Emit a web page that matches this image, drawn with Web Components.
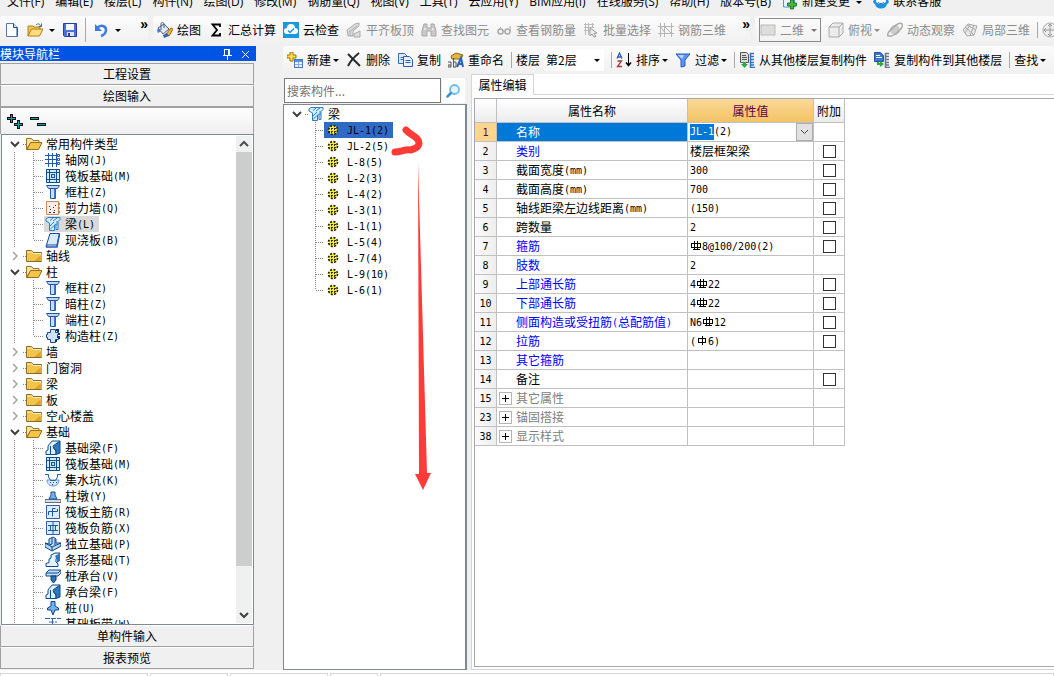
<!DOCTYPE html>
<html lang="zh-CN">
<head>
<meta charset="utf-8">
<title>属性编辑</title>
<style>
html,body{margin:0;height:100%}
body{font:12px/16px "Noto Sans CJK SC",sans-serif;color:#000;background:#f0f0f0;overflow:hidden}
</style>
</head>
<body>
<app-window></app-window>
<script>
/* Icon set: every icon is drawn on a 16 x 16 grid */
const page = (x, y, f = '#fff', s = '#4f74a8') => `<path d="M${x} ${y}h6l3 3v7h-9z" fill="${f}" stroke="${s}"/><path d="M${x + 2} ${y + 4}h5M${x + 2} ${y + 6}h5" stroke="${s}"/>`;
const beam = `<path d="M1 14.500V11l2-1V6l4-5h8L10 7v3l1 1v3.500z" fill="#dff0ff" stroke="#0b4a94"/><path d="M8 6l7-5v12l-4 1.500V10L9 9z" fill="#2f78bd" stroke="#0b4a94"/><path d="M5.500 6v8" stroke="#0b4a94"/>`;
const ICONS = {
  file: '<path d="M2.500 1.500h7l4 4v9h-11z" fill="#fff" stroke="#5577a5"/><path d="M9.500 1.500v4h4" fill="#cfe0f5" stroke="#2c4f80"/><path d="M13 6v8" stroke="#234777"/>',
  open: '<path d="M1 14V4h5l1 1h6v3H5z" fill="#f5c856" stroke="#b08223"/><path d="M1 14l3.500-7H16l-3.500 7z" fill="#ffdd7d" stroke="#b27c16"/><path d="M9 3c2-2 4-1 4.500 1M14.500 1.500v3h-3" fill="none" stroke="#44668f"/>',
  save: '<path d="M1.500 1.500h13v13h-12l-1-1z" fill="#4c6fd8" stroke="#2a3f9c"/><path d="M4 2h8v6H4z" fill="#f4f7ff"/><path d="M5 10h7v4H5z" fill="#dfe4f3"/><path d="M6 11h2v3H6z" fill="#2a3f9c"/>',
  undo: '<path d="M4 6c4-4 9-2 9 2 0 3-2 5-5 6" fill="none" stroke="#3f7be0" stroke-width="2.500"/><path d="M2 2v7h7z" fill="#3f7be0"/>',
  bucket: '<path d="M1 6l6-4 5 5-6 5z" fill="#e3e9f1" stroke="#4d5f78"/><path d="M4 8V2c0-2 3-2 3 0v4" fill="none" stroke="#4d5f78"/><path d="M1 6c-1 2-1 4 0 5l3-2z" fill="#3e7ad6"/><path d="M9 12l5-6 2 1-4 7z" fill="#f1b33b" stroke="#a06c14"/><path d="M6 13l4-2 2 3-5 2z" fill="#2e65c4"/>',
  sigma: '<path d="M12 5V2.500H4.500L9 8l-4.500 5.500H12V11" fill="none" stroke="#000" stroke-width="1.800"/>',
  cloud: '<rect width="16" height="16" fill="#1b98df"/><path d="M4 12a3 3 0 0 1 0-6 4 4 0 0 1 8 0 3 3 0 0 1 0 6z" fill="#fff"/><path d="M5 8.500l2 2 4-4" fill="none" stroke="#1b98df" stroke-width="1.500"/>',
  align: '<path d="M1 8l8-6 4-1v3l-6 5v5H2zM8 12l6-3v6H8z" fill="#ddd" stroke="#aaa"/><path d="M3 10l8-6M4 9v5" stroke="#aaa"/>',
  find: '<path d="M3 2h3v4h4V2h3l2 7v5h-5v-5H6v5H1V9z" fill="#c9c9c9" stroke="#a9a9a9"/><path d="M3 7h2M11 7h2" stroke="#fff"/>',
  glass: '<circle cx="4.500" cy="9.500" r="2.500" stroke="#aaa" stroke-width="1.500"/><circle cx="11.500" cy="9.500" r="2.500" stroke="#aaa" stroke-width="1.500"/><path d="M2 9l3-4M14 9V4M7 9h2" stroke="#aaa"/>',
  batch: '<path d="M1 2.500h10M1 5.500h10M1 8.500h6M2.500 1v12M5.500 1v12M9.500 1v5" stroke="#bbb"/><path d="M7 6l7 5-3 .5 2 3-2 .5-2-3-2 2z" fill="#eee" stroke="#999"/>',
  steel: '<path d="M2.500 1v14M6.500 1v14M13.500 1v14M0 4.500h16M0 11.500h16M6 4l7 7M2 4l5 7" stroke="#b5b5b5" fill="none"/>',
  flat: '<rect x="1" y="3" width="14" height="10" fill="#ddd" stroke="#bbb"/>',
  cube: '<path d="M1 5l4-4h10v10l-4 4H1z" fill="#ececec" stroke="#aaa"/><path d="M1 5h10v10M11 5l4-4" fill="none" stroke="#aaa"/>',
  orbit: '<circle cx="8" cy="8" r="5" fill="#ccc"/><path d="M1 14C-1 10 12-1 15 2s-9 13-12 12z" fill="none" stroke="#aaa" stroke-width="1.500"/>',
  local: '<path d="M1 8l5-6 9 2-3 9-7 1z" fill="#e8e8e8" stroke="#aaa"/><path d="M3 5l9 8M8 3l-5 8M12 3l-4 11M5 3l9 5" stroke="#aaa"/>',
  pan: '<circle cx="8" cy="8" r="7" fill="#eee" stroke="#aaa"/><path d="M8 2v12M2 8h12M6 4l2-2 2 2M6 12l2 2 2-2M4 6L2 8l2 2M12 6l2 2-2 2" stroke="#999" fill="none"/>',
  create: '<path d="M3 0h3v3h3v3H6v3H3V6H0V3h3z" fill="#ffdc45" stroke="#9b7510"/><rect x="7.500" y="7.500" width="8" height="8" fill="#e9f3ff" stroke="#4479bb"/><path d="M8 8h7v2H8z" fill="#5b93dc"/><path d="M8 12.500h7M11.500 10v5" stroke="#8caede"/>',
  del: '<path d="M2 2l12 12M13 1C8 5 4 10 2 14" stroke="#2b2b2b" stroke-width="2" fill="none"/>',
  copy: page(1.5, 1.5, '#dbe9ff', '#3c69ab') + page(6.5, 4.5, '#e7f1ff', '#2c5da8'),
  rename: '<path d="M3 4l5-3 7 2-2 4H4z" fill="#e4b53f" stroke="#8c6a1c"/><path d="M0 10h3v5H0v-2h3M5.500 6v9M5 10h3v5H5" stroke="#555" fill="none"/><path d="M9 15l4-9 2 9M10 12h4" stroke="#2862bd" stroke-width="2" fill="none"/>',
  sort: '<path d="M1 6.500L3.500 1 6 6.500M2 5h3" fill="none" stroke="#2f5db0" stroke-width="1.300"/><path d="M1.500 9h4l-4 5.500H6" fill="none" stroke="#a23838" stroke-width="1.300"/><path d="M12.500 1v12" stroke="#000"/><path d="M10 10.500l2.500 3 2.500-3" stroke="#000" stroke-width="1.500" fill="none"/>',
  filter: '<path d="M1 2h14l-5 6v6l-4 1V8z" fill="#5f93ee" stroke="#2a5ac2"/><path d="M3 3h6l-2 4z" fill="#b9d4ff"/>',
  from: '<path d="M1.500.5h6l2 2v8h-8z" fill="#ddd" stroke="#555"/><path d="M3 3.500h4M3 5.500h5M3 7.500h5" stroke="#555"/><path d="M4 10h3v2h2l-3.500 4L2 12h2z" fill="#2da64a"/><path d="M15 1.500h-3.500v14H16M12 4.500h3M12 7.500h3M12 10.500h3M12 13h3" stroke="#3472c0" stroke-width="1.500" fill="none"/>',
  to: '<path d="M.5.500h6l3 3v6h-9z" fill="#3c77d2" stroke="#2450a0"/><path d="M2 3.500h4M2 5.500h6" stroke="#fff"/><path d="M3 10v3h3v2l4-3-4-3v2H5v-1z" fill="#2da64a"/><path d="M15 1.500h-3.500v14H16M12 4.500h3M12 7.500h3M12 10.500h3M12 13h3" stroke="#66778c" stroke-width="1.500" fill="none"/>',
  change: '<path d="M1.500 0h8l3 3v10h-11z" fill="#e4f4ff" stroke="#3c9bd8"/><path d="M8.500 6h3v3h3v3h-3v3h-3v-3h-3V9h3z" fill="#52b043" stroke="#2c7d22"/>',
  service: '<path d="M1 6c0-8 14-8 14 0 2 2 0 4-1 4-1 6-11 6-12 0C1 10-1 8 1 6z" fill="#1b8fe0"/><ellipse cx="8" cy="7" rx="5" ry="3" fill="#fff"/><path d="M5 8c1 2 5 2 6 0" stroke="#1b6fc0" fill="none"/>',
  search: '<circle cx="9.500" cy="6.500" r="4.500" fill="#e4f4ff" stroke="#6fbbee" stroke-width="1.800"/><path d="M6 10l-3.500 3.500" stroke="#3c8fd0" stroke-width="2.500" stroke-linecap="round"/>',
  pin: '<path d="M5.500 3v6M10.500 3v6M5 3.500h6M9.500 3v6M3.500 9.500h9M8 10v4" stroke="#fff" fill="none" shape-rendering="crispEdges"/>',
  close: '<path d="M4 5l7 7M11 5l-7 7" stroke="#fff"/>',
  addall: '<path d="M3 1h3v3h3v3H6v3H3V7H0V4h3z" fill="#111"/><path d="M4.500 2v7M1 5.500h7" stroke="#00a5a0"/><path d="M10 7h3v3h3v3h-3v3h-3v-3H7v-3h3z" fill="#111"/><path d="M11.500 8v7M8 11.500h7" stroke="#00a5a0"/>',
  delall: '<path d="M0 4h9v3H0zM7 10h9v3H7z" fill="#111"/><path d="M1 5.500h7M8 11.500h7" stroke="#00a5a0"/>',
  folder: '<path d="M.5 13.500v-11h5l1.500 2h8.500v9z" fill="#f2c54f" stroke="#8b6b2c"/><path d="M1 4h5l1.500 1.500H15V13" fill="none" stroke="#fff0b5"/><path d="M8 13h7V7z" fill="#d99518" opacity=".7"/>',
  folderopen: '<path d="M.5 13.500v-11h5l1.500 2h6v3H4z" fill="#f8e3a0" stroke="#9a742c"/><path d="M1 13.500l3.500-7h11.500l-3.500 7z" fill="#f5c44a" stroke="#9a6d16"/>',
  grid: '<path d="M0 3.500h14M0 7.500h14M0 11.500h14M3.500 1v14M7.500 1v14M11.500 1v14" stroke="#2458ae" shape-rendering="crispEdges"/><path d="M12.500 2.500h2v2h-2zM12.500 6.500h2v2h-2zM12.500 10.500h2v2h-2z" fill="#fff" stroke="#2458ae"/>',
  raft: '<path d="M1.500 1.500h13v13h-13z" fill="#d5eaff" stroke="#0a4a93"/><path d="M1 4.500h14M1 11.500h14M4.500 1v14M11.500 1v14M6.500 6.500h3v3h-3z" fill="none" stroke="#0a4a93" shape-rendering="crispEdges"/>',
  column: '<path d="M1.500 1.500h13l-2 3h-9z" fill="#bcd9ff" stroke="#2456a8"/><path d="M5.500 4.500h5v10h-5z" fill="#c9e0ff" stroke="#2456a8"/><path d="M9 5h1.500v9H9z" fill="#3f73cc"/>',
  wall: '<path d="M1.500 1.500h12v13h-12z" fill="#f7ede6" stroke="#c98a62"/><path d="M4 6.500h1M8 7.500h1M5 9.500h1M9 10.500h1M4 12.500h2M8 12.500h2M10 5.500h1" stroke="#333"/><path d="M13 4h2M13 8h2M13 12h2" stroke="#d47433" stroke-width="2"/>',
  beam: '<path d="M1 3l2-1.500h12v2l-2 2v8h-2V8l-1.500 1v5.500h-5V7L1 5z" fill="#d8edff" stroke="#2c7bc2"/><path d="M5 4.500L8 2M8 5l4-3M5 10l4-4M5 13.500l4-4M12 9V5" fill="none" stroke="#1e83cf"/>',
  slab: '<path d="M5 1.500h9.500L12 13H1.500z" fill="#d9eaff" stroke="#164a9c"/><path d="M1.500 13v2H12l2.500-13" fill="none" stroke="#2659b1" stroke-width="1.500"/>',
  gear: '<path d="M5.500 1.500h5v3h3v2h-1v3h1v2h-3v3h-5v-3h-3v-2h-1v-3h1v-2h3z" fill="#cfe2fb" stroke="#174a92"/><path d="M11 2h2v2M14 5v2M12 9h2v2M11 12v2" stroke="#0b3270" stroke-width="2" fill="none"/>',
  fbeam: beam,
  pit: '<path d="M2 8c0 8 12 8 12 0z" fill="#d9eaff" stroke="#5c90d4"/><path d="M0 2.500h3.500V5l2 3.500h5l2-3.500V2.500H16" fill="none" stroke="#2a62b0"/><path d="M5 10.500h1M8 10.500h1M11 10.500h1M7 12.500h1" stroke="#164a92"/>',
  pier: '<path d="M0 11.500h16v3H0z" fill="#d7dce2" stroke="#63707d"/><path d="M4 11l2-4V4h4v3l2 4z" fill="#6fb1f2" stroke="#164f98"/>',
  main: '<path d="M1.500 1.500h13v13h-13z" fill="#dcecff" stroke="#315fae"/><path d="M3.500 11V7.500h9V5M7.500 12.500v-8h3" fill="none" stroke="#1956ac"/>',
  neg: '<path d="M1.500 1.500h13v13h-13z" fill="#dcecff" stroke="#315fae"/><path d="M3 5.500h10M3 10.500h10M5.500 5v6M10.500 5v6M8 2v12" fill="none" stroke="#1956ac"/>',
  iso: '<path d="M0 7l4 1V3l4-2 3 2v4h5v3l-9 5-7-4z" fill="#b6dafa" stroke="#0c4385"/><path d="M7 2v6l-3 1M10 3v6M7 15v-4l9-4M0 7l7 4" fill="none" stroke="#0c4385"/>',
  strip: '<path d="M1 14.500v-3l3-1V7l2-1V3l4-2h5L11 7v3l2 2v2.500z" fill="#e5f2ff" stroke="#0c4a92"/><path d="M10 4l5-3v8l-3 2V8z" fill="#3277bd"/>',
  cap: '<path d="M1 5l3-3h12v3l-3 3H1z" fill="#c5e0fa" stroke="#0c4a92"/><path d="M1 5h12l3-3" fill="none" stroke="#0c4a92"/><path d="M6 8h5v4l-2.500 3L6 12z" fill="#2f75bd" stroke="#0c3a75"/>',
  pile: '<path d="M6 1.500h4V6l3.500 2v2H10l-2 5-2-5H2.500V8L6 6z" fill="#71b1ec" stroke="#0c4385"/>',
  band: '<path d="M0 2.500h16M4 6h8M7.500 3v10" stroke="#2c66b5" stroke-dasharray="5 1"/>',
  cog: '<circle cx="8" cy="8" r="4.500" fill="#f4ed38" stroke="#111" stroke-dasharray="2 1.530" stroke-width="1.500"/><path d="M6.500 3v10M9.500 3v10M3 6.500h10M3 9.500h10" stroke="#332f00" stroke-dasharray="2 1" shape-rendering="crispEdges"/>',
  down: '<path d="M4 6l4 4 4-4" fill="none" stroke="#404040" stroke-width="2"/>',
  up: '<path d="M4 10l4-4 4 4" fill="none" stroke="#505050" stroke-width="2"/>',
  right: '<path d="M6 4l4 4-4 4" fill="none" stroke="#a3a3a3" stroke-width="1.500"/>'
};

function define(name, css, render) {
  customElements.define(name, class extends HTMLElement {
    constructor() { super(); this.attachShadow({ mode: 'open' }); }
    connectedCallback() {
      this.shadowRoot.innerHTML = `<style>*{box-sizing:border-box}${css}</style>${render(this)}`;
      if (this.ready) this.ready();
    }
  });
}
/* Latin runs take half the width of a Chinese character */
const half = s => s.replace(/[\x20-\x7e]+/g, m => `<span class="n">${m}</span>`);
const HALF = '.n{font:10px/1 "DejaVu Sans Mono",monospace;vertical-align:1px}';

define('ui-icon', ':host{display:block;flex:none;width:16px;height:16px}svg{display:block}', e =>
  `<svg width="16" height="16" viewBox="0 0 16 16" fill="none" aria-hidden="true">${ICONS[e.getAttribute('name')]}</svg>`);

define('tool-button', `:host{display:block;flex:none}
button{display:flex;align-items:center;gap:4px;border:0;padding:0;background:none;font:inherit;line-height:16px;color:inherit;white-space:nowrap}
i{width:0;height:0;margin-left:-2px;border:3px solid transparent;border-top-color:currentColor;border-bottom:0}
:host([wide]) i{margin-left:2px}`, e =>
  `<button type="button">${e.hasAttribute('icon') ? `<ui-icon name="${e.getAttribute('icon')}"></ui-icon>` : ''}<slot></slot>${e.hasAttribute('menu') ? '<i></i>' : ''}</button>`);

define('tool-group', `:host{display:flex;align-items:center;gap:7px;height:28px;padding:0 0 0 4px;border-radius:3px;background:linear-gradient(#fcfcfc,#f0f0f0);white-space:nowrap;min-width:0;overflow:hidden}`, () => '<slot></slot>');
define('tool-rule', ':host{display:block;flex:none;width:1px;height:16px;margin-right:-3px;background:#a8a8a8}', () => '');

define('menu-bar', `:host{display:flex;align-items:flex-end;gap:11px;height:16px;flex:none;padding:0 7px;overflow:hidden;white-space:nowrap;background:#f0f0f0;font-family:"Open Sans","Noto Sans CJK SC",sans-serif}
a{color:#000;text-decoration:none;line-height:28px;display:flex;align-items:center;gap:4px}
i{width:0;height:0;margin-left:2px;border:3px solid transparent;border-top-color:#000;border-bottom:0}`, () =>
  '文件(F) 编辑(E) 楼层(L) 构件(N) 绘图(D) 修改(M) 钢筋量(Q) 视图(V) 工具(T) 云应用(Y) BIM应用(I) 在线服务(S) 帮助(H) 版本号(B)'
    .split(' ').map(s => `<a href="#">${s}</a>`).join('') +
  '<a href="#"><ui-icon name="change"></ui-icon>新建变更 <i></i></a><a href="#"><ui-icon name="service"></ui-icon>联系客服</a>');

define('main-toolbar', `:host{display:flex;gap:5px;height:30px;flex:none;background:#f0f0f0;overflow:hidden}
.more{align-self:flex-start;font:bold 14px/16px "Liberation Sans",sans-serif;margin-left:auto}
.file{width:148px;flex:none}.main{width:597px;flex:none}.view{flex:1}
.file tool-rule{height:24px;margin-right:0}
.off{color:#8c8c8c}
.combo{display:flex;align-items:center;height:24px;width:62px;border:1px solid #8a8a8a;position:relative;color:#8c8c8c;flex:none}
select{appearance:none;border:0;background:none;font:inherit;color:inherit;opacity:1;width:44px;padding:0 0 0 4px}
.combo i{position:absolute;right:3px;border:3px solid transparent;border-top-color:#777;border-bottom:0;pointer-events:none}`, () =>
  `<tool-group class="file"><tool-button icon="file"></tool-button><tool-button icon="open" menu wide></tool-button><tool-button icon="save"></tool-button><tool-rule></tool-rule><tool-button icon="undo" menu wide></tool-button><span class="more">»</span></tool-group>
  <tool-group class="main"><tool-button icon="bucket">绘图</tool-button><tool-button icon="sigma">汇总计算</tool-button><tool-button icon="cloud">云检查</tool-button>
  <tool-button class="off" icon="align">平齐板顶</tool-button><tool-button class="off" icon="find">查找图元</tool-button><tool-button class="off" icon="glass">查看钢筋量</tool-button><tool-button class="off" icon="batch">批量选择</tool-button><tool-button class="off" icon="steel">钢筋三维</tool-button><span class="more">»</span></tool-group>
  <tool-group class="view"><div class="combo"><ui-icon name="flat"></ui-icon><select aria-label="视图" disabled><option>二维</option></select><i></i></div>
  <tool-button class="off" icon="cube" menu>俯视</tool-button><tool-button class="off" icon="orbit">动态观察</tool-button><tool-button class="off" icon="local">局部三维</tool-button><tool-rule></tool-rule><tool-button class="off" icon="pan"></tool-button></tool-group>`);

define('edit-toolbar', `:host{display:block;flex:none}
.floor{display:flex;align-items:center;gap:4px;flex:none}
.combo{position:relative;display:flex;align-items:center;background:#fff;height:22px}
select{appearance:none;border:0;background:none;font:inherit;width:60px;padding:0 2px;height:22px}
i{position:absolute;right:4px;border:3px solid transparent;border-top-color:#000;border-bottom:0;pointer-events:none}`, () =>
  `<tool-group><tool-button icon="create" menu>新建</tool-button><tool-button icon="del">删除</tool-button><tool-button icon="copy">复制</tool-button><tool-button icon="rename">重命名</tool-button><tool-rule></tool-rule>
  <div class="floor"><label for="floor">楼层</label><span class="combo"><select id="floor"><option>第2层</option></select><i></i></span></div><tool-rule></tool-rule>
  <tool-button icon="sort" menu>排序</tool-button><tool-button icon="filter" menu>过滤</tool-button><tool-rule></tool-rule><tool-button icon="from">从其他楼层复制构件</tool-button><tool-button icon="to">复制构件到其他楼层</tool-button><tool-rule></tool-rule><tool-button menu>查找</tool-button></tool-group>`);

/* One line of a tree; the dotted guides are painted behind the leaf rows */
define('tree-row', `:host{display:flex;align-items:center;height:16px;white-space:nowrap}
${HALF}
.twist{display:flex;width:24px;padding-left:5px;background:repeating-linear-gradient(90deg,#888 0 1px,transparent 1px 2px) 21px 8px/3px 1px no-repeat}
.label{margin-left:4px}
.guide{width:var(--indent,42px);height:16px;background:
 repeating-linear-gradient(90deg,#888 0 1px,transparent 1px 2px) 32px 8px/9px 1px no-repeat,
 repeating-linear-gradient(#888 0 1px,transparent 1px 2px) 31px 0/1px 16px no-repeat,
 repeating-linear-gradient(#888 0 1px,transparent 1px 2px) 12px 0/1px var(--outer,16px) no-repeat}
:host([last]) .guide{background-size:9px 1px,1px 8px,1px var(--outer,16px)}
.hit{display:flex;align-items:center;height:16px;padding:0 4px 0 0}
:host([leaf]) .hit{padding-left:1px}
:host([selected]) .hit{background:var(--pick,#d9d9d9)}
:host([leaf]) .label{margin-left:var(--leaf-gap,4px)}`, e => {
  const leaf = e.hasAttribute('leaf'), open = e.hasAttribute('open');
  return `${leaf ? '<div class="guide"></div>' : `<div class="twist"><ui-icon name="${open ? 'down' : 'right'}"></ui-icon></div>`}
  <div class="hit"><ui-icon name="${e.getAttribute('icon') || (open ? 'folderopen' : 'folder')}"></ui-icon><span class="label">${half(e.getAttribute('label'))}</span></div>`;
});

const NAV = [
  ['常用构件类型', ['grid 轴网(J)', 'raft 筏板基础(M)', 'column 框柱(Z)', 'wall 剪力墙(Q)', 'beam 梁(L)', 'slab 现浇板(B)']],
  ['轴线'],
  ['柱', ['column 框柱(Z)', 'column 暗柱(Z)', 'column 端柱(Z)', 'gear 构造柱(Z)']],
  ['墙'], ['门窗洞'], ['梁'], ['板'], ['空心楼盖'],
  ['基础', ['fbeam 基础梁(F)', 'raft 筏板基础(M)', 'pit 集水坑(K)', 'pier 柱墩(Y)', 'main 筏板主筋(R)', 'neg 筏板负筋(X)', 'iso 独立基础(P)', 'strip 条形基础(T)', 'cap 桩承台(V)', 'fbeam 承台梁(F)', 'pile 桩(U)', 'band 基础板带(W)']]
];
define('nav-panel', `:host{display:flex;flex-direction:column;width:256px;flex:none;padding-bottom:1px}
header{display:flex;align-items:center;height:15px;background:#0054e3;color:#fff;flex:none;padding-right:2px}
header span{flex:1;line-height:15px}
header ui-icon+ui-icon{margin-left:3px}
.bar{display:block;height:22px;width:254px;flex:none;margin:0;padding:0;border:1px solid #a0a0a0;border-top-color:#fff;background:#f0f0f0;font:inherit;text-align:center;color:#000}
header+.bar{margin-top:2px;border-top-color:#a0a0a0}
.tools{display:flex;gap:7px;align-items:center;height:27px;width:254px;flex:none;border:1px solid #a0a0a0;border-bottom:0;padding-left:6px;background:linear-gradient(#fdfdfd,#efefef)}
.view{display:flex;flex:1;min-height:0;width:253px;margin-left:1px;border:1px solid #828790;background:#fff}
.list{flex:1;overflow:hidden;padding-top:1px}
.scroll{width:16px;background:#f0f0f0;display:flex;flex-direction:column;margin:1px 1px 1px 0}
.thumb{flex:413;background:#cdcdcd}.rest{flex:41}`, () =>
  `<header><span>模块导航栏</span><ui-icon name="pin"></ui-icon><ui-icon name="close"></ui-icon></header>
  <button class="bar" type="button">工程设置</button><button class="bar" type="button">绘图输入</button>
  <div class="tools"><ui-icon name="addall"></ui-icon><ui-icon name="delall"></ui-icon></div>
  <div class="view"><div class="list">${NAV.map(([name, kids]) => `<tree-row label="${name}" ${kids ? 'open' : ''}></tree-row>` +
    (kids || []).map((k, i) => { const [ic, t] = k.split(' '); return `<tree-row leaf icon="${ic}" label="${t}" ${i === kids.length - 1 ? 'last' : ''} ${t === '梁(L)' ? 'selected' : ''}></tree-row>`; }).join('')).join('')}</div>
  <div class="scroll"><ui-icon name="up"></ui-icon><div class="thumb"></div><div class="rest"></div><ui-icon name="down"></ui-icon></div></div>
  <button class="bar" type="button">单构件输入</button><button class="bar" type="button">报表预览</button>`);

define('part-panel', `:host{display:flex;flex-direction:column;position:relative;width:184px;flex:none;padding-top:4px}
.search{display:flex;align-items:stretch;height:25px;padding:0 2px 0 1px;gap:1px;flex:none}
input{flex:1;min-width:0;border:1px solid #7a7a7a;background:#fff;font:inherit;padding:0 2px}
input::placeholder{color:#757575}
button{width:23px;border:0;padding:0 3px;background:#fff}
.list{flex:1;margin-top:1px;border:1px solid #828790;border-right-width:2px;background:#fff;padding-top:1px;overflow:hidden;--outer:0px;--indent:40px;--leaf-gap:6px;--pick:#316ac5}
.mark{position:absolute;left:108px;top:48px;pointer-events:none}`, () =>
  `<div class="search"><input type="text" aria-label="搜索构件" placeholder="搜索构件..."><button type="button" aria-label="搜索"><ui-icon name="search"></ui-icon></button></div>
  <div class="list"><tree-row open icon="beam" label="梁"></tree-row>${['JL-1(2)', 'JL-2(5)', 'L-8(5)', 'L-2(3)', 'L-4(2)', 'L-3(1)', 'L-1(1)', 'L-5(4)', 'L-7(4)', 'L-9(10)', 'L-6(1)']
    .map((t, i, a) => `<tree-row leaf icon="cog" label="${t}" ${i ? '' : 'selected'} ${i === a.length - 1 ? 'last' : ''}></tree-row>`).join('')}</div>
  <svg class="mark" width="44" height="372" viewBox="0 0 44 372" aria-hidden="true"><path d="M15 8c4 5 13 7 13 13 0 5-5 6-8 7-6-1-10 2-16 2" fill="none" stroke="#ff3b38" stroke-width="7" stroke-linecap="round" stroke-linejoin="round"/><path d="M27 40l9 311h4l-8 17-8-16h4z" fill="#ff3b38"/></svg>`);

/* Grade marks of the reinforcing bars, one character wide */
const BAR = '<svg width="12" height="10" viewBox="0 0 12 10" role="img" aria-label="HRB400"><path d="M1.500 2.500h9v4h-9zM4.500 0v9M7.500 0v9M3 8.500h7" fill="none" stroke="#000" shape-rendering="crispEdges"/></svg>';
const PLAIN = '<svg width="12" height="10" viewBox="0 0 12 10" role="img" aria-label="HPB300"><path d="M2.500 2.500h7v4h-7zM6.500 0v9" fill="none" stroke="#000" shape-rendering="crispEdges"/></svg>';
const ROWS = [
  [1, '名称', 'JL-1(2)', 'edit', 0], [2, '类别', '楼层框架梁', 'key', 1], [3, '截面宽度(mm)', '300', '', 1], [4, '截面高度(mm)', '700', '', 1],
  [5, '轴线距梁左边线距离(mm)', '(150)', '', 1], [6, '跨数量', '2', '', 1], [7, '箍筋', '#8@100/200(2)', 'key', 1], [8, '肢数', '2', 'key', 0],
  [9, '上部通长筋', '4#22', 'key', 1], [10, '下部通长筋', '4#22', 'key', 1], [11, '侧面构造或受扭筋(总配筋值)', 'N6#12', 'key', 1],
  [12, '拉筋', '($6)', 'key', 1], [13, '其它箍筋', '', 'key', 0], [14, '备注', '', '', 1],
  [15, '其它属性', '', 'group', 0], [23, '锚固搭接', '', 'group', 0], [38, '显示样式', '', 'group', 0]
];
const value = s => s.split(/([#$])/).map(p => p === '#' ? BAR : p === '$' ? PLAIN : half(p)).join('');
define('property-grid', `:host{display:block}
${HALF}
table{border-collapse:separate;border-spacing:0;table-layout:fixed;width:370px}
th,td{border:solid #c0c0c0;border-width:0 1px 1px 0;padding:0;height:19px;line-height:18px;text-align:left;font-weight:400;white-space:nowrap;overflow:hidden}
thead th{height:24px;text-align:center;background:linear-gradient(#fff,#ececec)}
thead .val{background:linear-gradient(#fbd999,#f3c364);color:#5a0045}
tbody th{text-align:center;background:linear-gradient(90deg,#fbfbfb,#eee)}
.name{padding-left:19px}.v{padding-left:2px}.x{text-align:center}
.key .name{color:#00f}.group .name{color:#808080;padding-left:2px}
.edit .name{background:#0078d7;color:#fff}.edit th{background:#ffd48b;color:#5a0045}
.ed{display:flex;height:18px}
.ed input{flex:1;min-width:0;border:0;padding:0;outline:0;background:#fff;font:10px/16px "DejaVu Sans Mono",monospace}
.ed input::selection{background:#0078d7;color:#fff}
.ed button{width:17px;border:1px solid #adadad;background:#e1e1e1;padding:0;display:flex;align-items:center;justify-content:center}
td svg{vertical-align:0}
.x input{appearance:none;display:block;width:13px;height:13px;margin:0 auto;border:1px solid #333;background:#fff}
.grp{display:flex;align-items:center;gap:4px}
.plus{width:13px;height:13px;border:1px solid #b5b5b5;background:#fff;padding:0;margin:0;display:flex;align-items:center;justify-content:center}`, e => {
  e.ready = () => { const i = e.shadowRoot.querySelector('.ed input'); i.focus({ preventScroll: true }); i.setSelectionRange(0, 4); };
  return `<table><colgroup><col style="width:22px"><col style="width:191px"><col style="width:126px"><col style="width:31px"></colgroup>
  <thead><tr><th></th><th>属性名称</th><th class="val">属性值</th><th>附加</th></tr></thead><tbody>${ROWS.map(([n, name, v, kind, box]) =>
    `<tr class="${kind}"><th>${half(String(n))}</th><td class="name">${kind === 'group' ? `<div class="grp"><button class="plus" type="button" aria-label="展开"><svg width="9" height="9" viewBox="0 0 9 9"><path d="M4.500 1v7M1 4.500h7" stroke="#000"/></svg></button>${name}</div>` : half(name)}</td>
    <td class="v">${kind === 'edit' ? `<div class="ed"><input type="text" aria-label="名称" value="${v}"><button type="button" aria-label="下拉"><svg width="9" height="6" viewBox="0 0 9 6"><path d="M1 1l3.500 3.500L8 1" fill="none" stroke="#444"/></svg></button></div>` : value(v)}</td>
    <td class="x">${box ? `<input type="checkbox" aria-label="${name}附加">` : ''}</td></tr>`).join('')}</tbody></table>`;
});

define('property-panel', `:host{display:flex;flex-direction:column;flex:1;min-width:0;margin-left:4px;background:#fff;border-left:1px solid #d5d5d5;border-bottom:1px solid #d5d5d5;overflow:hidden}
.tabs{display:flex;height:21px;flex:none}
button{width:62px;border:0;border-right:1px solid #d5d5d5;border-top:1px solid #d5d5d5;background:#fff;padding:0;font:inherit;text-align:center}
.tabs::after{content:"";flex:1;border-bottom:1px solid #d5d5d5}
.page{flex:1;margin:3px 0 2px 2px;border:1px solid #a6a6ac;border-right:0;min-height:0}`, () =>
  '<div class="tabs"><button type="button">属性编辑</button></div><div class="page"><property-grid></property-grid></div>');

define('status-bar', `:host{display:flex;gap:2px;height:6px;flex:none;padding-top:3px;background:#fff}
span{border:1px solid #d7d7d7;border-bottom:0;background:#fff;flex:0 0 98px}
span:nth-of-type(1){flex-basis:148px}span:nth-of-type(2){flex-basis:78px}span:nth-of-type(4){flex-basis:48px}span:last-of-type{flex:1}`, () => '<span></span><span></span><span></span><span></span><span></span>');

define('app-window', `:host{display:flex;flex-direction:column;height:100vh}
main{display:flex;flex:1;min-height:0}
.work{display:flex;flex-direction:column;flex:1;min-width:0;margin-left:27px}
.panes{display:flex;flex:1;min-height:0}`, () =>
  `<menu-bar></menu-bar><main-toolbar></main-toolbar>
  <main><nav-panel></nav-panel><div class="work"><edit-toolbar></edit-toolbar><div class="panes"><part-panel></part-panel><property-panel></property-panel></div></div></main>
  <status-bar></status-bar>`);
</script>
</body>
</html>
